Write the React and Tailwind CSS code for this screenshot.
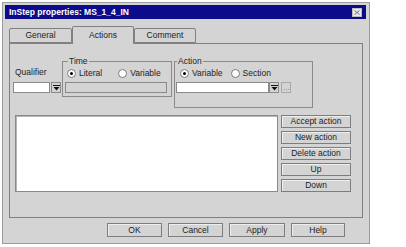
import React from "react";

const Radio = ({ checked }) => (
  <span className="w-[9px] h-[9px] rounded-full bg-white border border-[#7a7a7a] flex items-center justify-center shrink-0">
    {checked && <span className="w-[3px] h-[3px] rounded-full bg-black" />}
  </span>
);

const Arrow = () => (
  <svg width="7" height="6" viewBox="0 0 7 6">
    <path d="M0 0h7v1H0z M0.5 2h6L3.5 5.5z" fill="#111" />
  </svg>
);

const Btn = ({ children, w = "w-[70px]", h = "h-[13px]" }) => (
  <div
    className={`${w} ${h} border border-[#7d7d7d] bg-[#d4d4d4] shadow-[inset_1px_1px_0_#eeeeee] flex items-center justify-center text-[8.5px] leading-none text-[#222]`}
  >
    {children}
  </div>
);

export default function App() {
  return (
    <div
      className="w-[406px] h-[247px] bg-white overflow-hidden"
      style={{ fontFamily: '"Liberation Sans", Arial, sans-serif' }}
    >
      <div className="ml-[2px] mt-[2px] w-[368px] h-[242px] border border-[#9c9c9c] bg-[#d4d4d4] flex flex-col">
        {/* title bar */}
        <div className="ml-[2px] mt-[2px] w-[361px] h-[14px] bg-[#0b0b8c] flex items-center justify-between pl-[4px] pr-[4px]">
          <span className="text-white font-bold text-[8.5px] leading-none">InStep properties: MS_1_4_IN</span>
          <div className="w-[10px] h-[9px] bg-[#e8e8e8] border border-[#bdbdbd] flex items-center justify-center">
            <svg width="6" height="5" viewBox="0 0 6 5">
              <path d="M0.5 0.5L5.5 4.5M5.5 0.5L0.5 4.5" stroke="#777" strokeWidth="1" />
            </svg>
          </div>
        </div>

        {/* tabs */}
        <div className="ml-[6px] mt-[7px] h-[18px] -mb-[1px] flex items-end relative z-10">
          <div className="w-[63px] h-[15px] border border-[#808080] rounded-t-[2px] flex items-center justify-center text-[8.5px] leading-none text-[#222] mb-[1px]">
            General
          </div>
          <div className="w-[62px] h-[18px] border border-[#808080] border-b-0 bg-[#d4d4d4] rounded-t-[2px] flex items-start justify-center pt-[4px] text-[8.5px] leading-none text-[#222]">
            Actions
          </div>
          <div className="w-[62px] h-[15px] border border-[#808080] rounded-t-[2px] flex items-center justify-center text-[8.5px] leading-none text-[#222] mb-[1px]">
            Comment
          </div>
        </div>

        {/* panel */}
        <div className="ml-[6px] w-[354px] h-[175px] border border-[#808080] flex flex-col text-[8.5px] leading-[10px] text-[#222]">
          {/* row 1 */}
          <div className="mt-[12px] ml-[3px] flex items-start">
            {/* qualifier */}
            <div className="flex flex-col mt-[11px]">
              <span className="ml-[2px] leading-[10px]">Qualifier</span>
              <div className="mt-[5px] w-[48px] h-[11px] flex">
                <div className="w-[37px] h-[11px] bg-white border border-[#8a8a8a]" />
                <div className="ml-[1px] w-[10px] h-[11px] border border-[#8a8a8a] bg-[#d4d4d4] flex items-center justify-center">
                  <Arrow />
                </div>
              </div>
            </div>

            {/* time group */}
            <fieldset className="ml-[1px] w-[110px] h-[41px] border border-[#8a8a8a] px-[2px]">
              <legend className="ml-[3px] px-[1px] leading-[10px]">Time</legend>
              <div className="mt-[2px] ml-[2px] flex items-center h-[10px]">
                <Radio checked />
                <span className="ml-[3px]">Literal</span>
                <span className="ml-[16px]"><Radio /></span>
                <span className="ml-[3px]">Variable</span>
              </div>
              <div className="mt-[4px] w-[102px] h-[11px] border border-[#8a8a8a] bg-[#d4d4d4]" />
            </fieldset>

            {/* action group */}
            <fieldset className="ml-[2px] w-[139px] h-[52px] border border-[#8a8a8a] px-[1px]">
              <legend className="ml-[1px] px-[1px] leading-[10px]">Action</legend>
              <div className="mt-[2px] ml-[4px] flex items-center h-[10px]">
                <Radio checked />
                <span className="ml-[3px]">Variable</span>
                <span className="ml-[8px]"><Radio /></span>
                <span className="ml-[3px]">Section</span>
              </div>
              <div className="mt-[4px] flex items-center">
                <div className="w-[93px] h-[11px] bg-white border border-[#8a8a8a]" />
                <div className="w-[10px] h-[11px] border border-[#8a8a8a] bg-[#d4d4d4] flex items-center justify-center">
                  <Arrow />
                </div>
                <div className="ml-[2px] w-[10px] h-[11px] border border-[#a8a8a8] bg-[#d4d4d4] flex items-end justify-center gap-[1px] pb-[2px]">
                  <span className="w-[1px] h-[1px] bg-[#9a9a9a]" />
                  <span className="w-[1px] h-[1px] bg-[#9a9a9a]" />
                  <span className="w-[1px] h-[1px] bg-[#9a9a9a]" />
                </div>
              </div>
            </fieldset>
          </div>

          {/* row 2 */}
          <div className="mt-[7px] ml-[5px] flex items-start">
            <div className="w-[263px] h-[77px] bg-white border border-[#8a8a8a] shadow-[inset_1px_1px_0_#b5b5b5]" />
            <div className="ml-[3px] flex flex-col gap-[3px]">
              <Btn>Accept action</Btn>
              <Btn>New action</Btn>
              <Btn>Delete action</Btn>
              <Btn>Up</Btn>
              <Btn>Down</Btn>
            </div>
          </div>
        </div>

        {/* bottom buttons */}
        <div className="mt-[5px] ml-[104px] flex gap-[6px]">
          <Btn w="w-[55px]" h="h-[14px]">OK</Btn>
          <Btn w="w-[55px]" h="h-[14px]">Cancel</Btn>
          <Btn w="w-[56px]" h="h-[14px]">Apply</Btn>
          <Btn w="w-[54px]" h="h-[14px]">Help</Btn>
        </div>
      </div>
    </div>
  );
}
